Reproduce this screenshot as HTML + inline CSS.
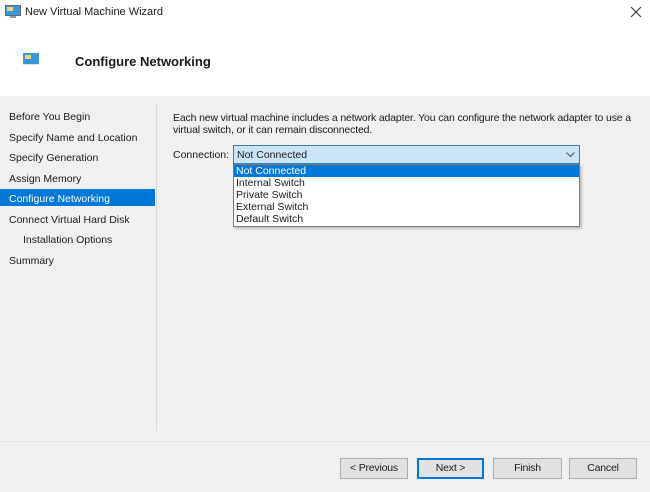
<!DOCTYPE html>
<html><head><style>
*{margin:0;padding:0;box-sizing:border-box}
body{width:650px;height:492px;background:#f0f0f0;font-family:"Liberation Sans",sans-serif;font-size:10.5px;color:#1a1a1a;position:relative;overflow:hidden}
.abs{position:absolute}
.top{left:0;top:0;width:650px;height:96px;background:#fff}
.nav div{position:absolute;left:9px;white-space:nowrap}
.btn{position:absolute;top:458px;height:21px;background:#e1e1e1;border:1px solid #adadad;text-align:center;line-height:19px;font-size:10.5px;letter-spacing:-0.2px}
.opt{position:absolute;left:2px;height:12px;line-height:12px}
</style></head><body>
<div class="abs top"></div>
<svg class="abs" style="left:5px;top:5px" width="16" height="14"><rect x="0.5" y="0.5" width="15" height="10" fill="#3a96dd" stroke="#5a6a7a"/><rect x="2" y="2" width="6" height="4" fill="#f5d76e"/><rect x="5" y="11" width="6" height="2" fill="#8899aa"/></svg>
<div class="abs" style="left:25px;top:6px;font-size:11px">New Virtual Machine Wizard</div>
<svg class="abs" style="left:630px;top:6px" width="12" height="12"><path d="M1 1L11 11M11 1L1 11" stroke="#333" stroke-width="1.1"/></svg>
<svg class="abs" style="left:23px;top:53px" width="16" height="12"><rect x="0" y="0" width="16" height="11" fill="#3a96dd"/><rect x="2" y="2" width="6" height="4" fill="#f5d76e"/><rect x="0" y="11" width="16" height="1" fill="#cfe0ee"/></svg>
<div class="abs" style="left:75px;top:54px;font-size:13px;font-weight:bold">Configure Networking</div>
<div class="abs" style="left:156px;top:104px;width:1px;height:327px;background:#d8d8d8"></div>
<div class="abs" style="left:0;top:441px;width:650px;height:1px;background:#e4e4e4"></div>
<div class="abs" style="left:0;top:189px;width:155px;height:17px;background:#0078d7"></div>
<div class="nav">
<div style="top:111px">Before You Begin</div>
<div style="top:132px">Specify Name and Location</div>
<div style="top:152px">Specify Generation</div>
<div style="top:173px">Assign Memory</div>
<div style="top:193px;color:#fff">Configure Networking</div>
<div style="top:214px">Connect Virtual Hard Disk</div>
<div style="top:234px;left:23px">Installation Options</div>
<div style="top:255px">Summary</div>
</div>
<div class="abs" style="left:173px;top:112px;width:476px;line-height:12px;letter-spacing:-0.15px">Each new virtual machine includes a network adapter. You can configure the network adapter to use a virtual switch, or it can remain disconnected.</div>
<div class="abs" style="left:173px;top:149px">Connection:</div>
<div class="abs" style="left:233px;top:145px;width:347px;height:19px;background:#cce4f7;border:1px solid #3c7fb1"><span class="abs" style="left:3px;top:3px">Not Connected</span>
<svg class="abs" style="left:332px;top:6px" width="9" height="6"><path d="M0.5 0.5L4.5 4.5L8.5 0.5" stroke="#555" fill="none"/></svg></div>
<div class="abs" style="left:233px;top:164px;width:347px;height:63px;background:#fff;border:1px solid #7a7a7a;box-shadow:2px 2px 2px rgba(0,0,0,.2)">
<div class="abs" style="left:0;top:0;width:345px;height:12px;background:#0078d7"></div>
<div class="opt" style="top:0;color:#fff">Not Connected</div>
<div class="opt" style="top:12px">Internal Switch</div>
<div class="opt" style="top:24px">Private Switch</div>
<div class="opt" style="top:36px">External Switch</div>
<div class="opt" style="top:48px">Default Switch</div>
</div>
<div class="btn" style="left:340px;width:68px">&lt; Previous</div>
<div class="btn" style="left:417px;width:67px;border:2px solid #0078d7;line-height:17px">Next &gt;</div>
<div class="btn" style="left:493px;width:69px">Finish</div>
<div class="btn" style="left:569px;width:68px">Cancel</div>
</body></html>
